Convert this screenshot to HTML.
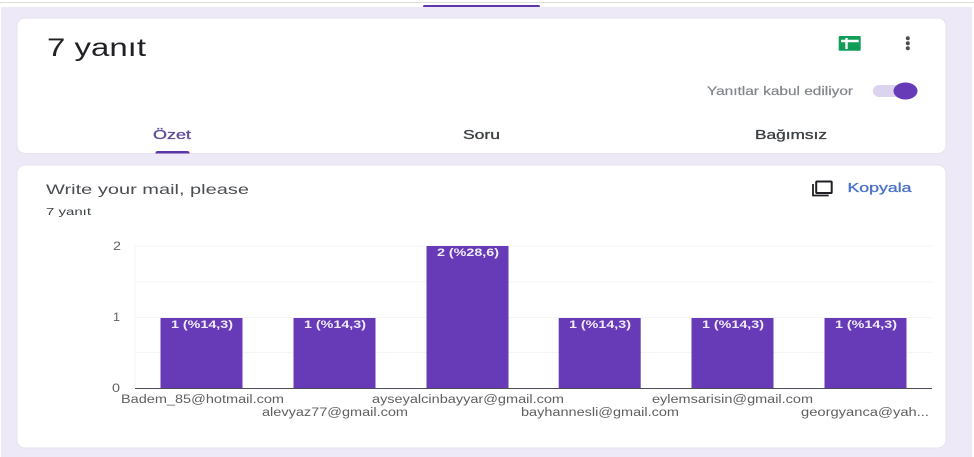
<!DOCTYPE html>
<html lang="tr">
<head>
<meta charset="utf-8">
<title>7 yanıt</title>
<style>
html,body{margin:0;padding:0;width:974px;height:457px;overflow:hidden;background:#fff}
svg{display:block;position:absolute;left:0;top:0}
text{font-family:"Liberation Sans",sans-serif}
</style>
</head>
<body>
<svg width="974" height="457" viewBox="0 0 974 457" xmlns="http://www.w3.org/2000/svg">
<rect width="974" height="457" fill="#fff"/>
<rect x="1" y="7" width="971" height="450" fill="#ede9f7"/>
<rect x="0" y="2" width="974" height="1" fill="#dcdcdc"/>
<path d="M423 7V6.500Q423 5 425 5H538Q540 5 540 6.500V7Z" fill="#5e35a8"/>

<rect x="17" y="18" width="929" height="135.500" rx="8" fill="#fff" stroke="#e6e2ee" stroke-width="1"/>
<rect x="17" y="165" width="929" height="283" rx="8" fill="#fff" stroke="#e6e2ee" stroke-width="1"/>

<text x="47" y="56" font-size="25" fill="#202124" textLength="99" lengthAdjust="spacingAndGlyphs">7 yanıt</text>

<rect x="838.700" y="36" width="22" height="14.700" rx="1" fill="#0f9d58"/>
<path d="M841 41H858.700M846.500 38V49" stroke="#fff" stroke-width="2.400" fill="none"/>
<circle cx="907.800" cy="38.200" r="2" fill="#4a4d52"/>
<circle cx="907.800" cy="43.300" r="2" fill="#4a4d52"/>
<circle cx="907.800" cy="48.300" r="2" fill="#4a4d52"/>

<text x="707" y="95" font-size="11.500" fill="#80868b" stroke="#80868b" stroke-width="0.200" textLength="146" lengthAdjust="spacingAndGlyphs">Yanıtlar kabul ediliyor</text>
<rect x="873" y="85" width="36" height="12" rx="6" fill="#dcd3ee"/>
<ellipse cx="905.500" cy="91" rx="12" ry="8.500" fill="#673ab7"/>

<g stroke-width="0.300">
<text x="153" y="139" font-size="12.500" fill="#5e4b9b" stroke="#5e4b9b" textLength="38" lengthAdjust="spacingAndGlyphs">Özet</text>
<text x="463" y="139" font-size="12.500" fill="#3c4043" stroke="#3c4043" textLength="37" lengthAdjust="spacingAndGlyphs">Soru</text>
<text x="755" y="139" font-size="12.500" fill="#3c4043" stroke="#3c4043" textLength="72" lengthAdjust="spacingAndGlyphs">Bağımsız</text>
</g>
<path d="M155.500 153.500V153Q155.500 151 158 151H187Q189.500 151 189.500 153V153.500Z" fill="#5e35a8"/>

<text x="46" y="194" font-size="14" fill="#4a4d52" textLength="203" lengthAdjust="spacingAndGlyphs">Write your mail, please</text>
<text x="46" y="215" font-size="10.500" fill="#3c4043" textLength="45" lengthAdjust="spacingAndGlyphs">7 yanıt</text>

<path d="M813 184V195.500H828.700" fill="none" stroke="#202124" stroke-width="1.800"/>
<rect x="816.200" y="181.500" width="15.500" height="11.500" rx="0.800" fill="none" stroke="#202124" stroke-width="2"/>
<text x="847.500" y="192" font-size="12.500" fill="#4a72c9" stroke="#4a72c9" stroke-width="0.300" textLength="64" lengthAdjust="spacingAndGlyphs">Kopyala</text>

<path d="M135 246H932M135 282H932M135 317.500H932M135 352.500H932" stroke="#f5f5f5" stroke-width="1" fill="none"/>
<path d="M135 246V388" stroke="#f5f5f5" stroke-width="1" fill="none"/>

<g fill="#673ab7">
<rect x="160.500" y="318" width="82" height="70"/>
<rect x="293.500" y="318" width="82" height="70"/>
<rect x="426.500" y="246" width="82" height="142"/>
<rect x="558.700" y="318" width="82" height="70"/>
<rect x="691.500" y="318" width="82" height="70"/>
<rect x="824.500" y="318" width="82" height="70"/>
</g>
<rect x="135" y="388" width="797" height="1" fill="#4f4b57"/>

<g font-size="11" font-weight="bold" fill="#f1edf8">
<text x="171" y="328" textLength="62" lengthAdjust="spacingAndGlyphs">1 (%14,3)</text>
<text x="304" y="328" textLength="62" lengthAdjust="spacingAndGlyphs">1 (%14,3)</text>
<text x="437" y="256" textLength="62" lengthAdjust="spacingAndGlyphs">2 (%28,6)</text>
<text x="569" y="328" textLength="62" lengthAdjust="spacingAndGlyphs">1 (%14,3)</text>
<text x="702" y="328" textLength="62" lengthAdjust="spacingAndGlyphs">1 (%14,3)</text>
<text x="835" y="328" textLength="62" lengthAdjust="spacingAndGlyphs">1 (%14,3)</text>
</g>

<g font-size="11.500" fill="#5f5f5f">
<text x="113" y="250" textLength="8" lengthAdjust="spacingAndGlyphs">2</text>
<text x="113" y="321" textLength="7" lengthAdjust="spacingAndGlyphs">1</text>
<text x="112" y="392" textLength="8" lengthAdjust="spacingAndGlyphs">0</text>
<text x="121" y="403" textLength="163" lengthAdjust="spacingAndGlyphs">Badem_85@hotmail.com</text>
<text x="262" y="416" textLength="146" lengthAdjust="spacingAndGlyphs">alevyaz77@gmail.com</text>
<text x="372" y="403" textLength="192" lengthAdjust="spacingAndGlyphs">ayseyalcinbayyar@gmail.com</text>
<text x="521" y="416" textLength="158" lengthAdjust="spacingAndGlyphs">bayhannesli@gmail.com</text>
<text x="652" y="403" textLength="161" lengthAdjust="spacingAndGlyphs">eylemsarisin@gmail.com</text>
<text x="801" y="416" textLength="128" lengthAdjust="spacingAndGlyphs">georgyanca@yah...</text>
</g>
</svg>
</body>
</html>
